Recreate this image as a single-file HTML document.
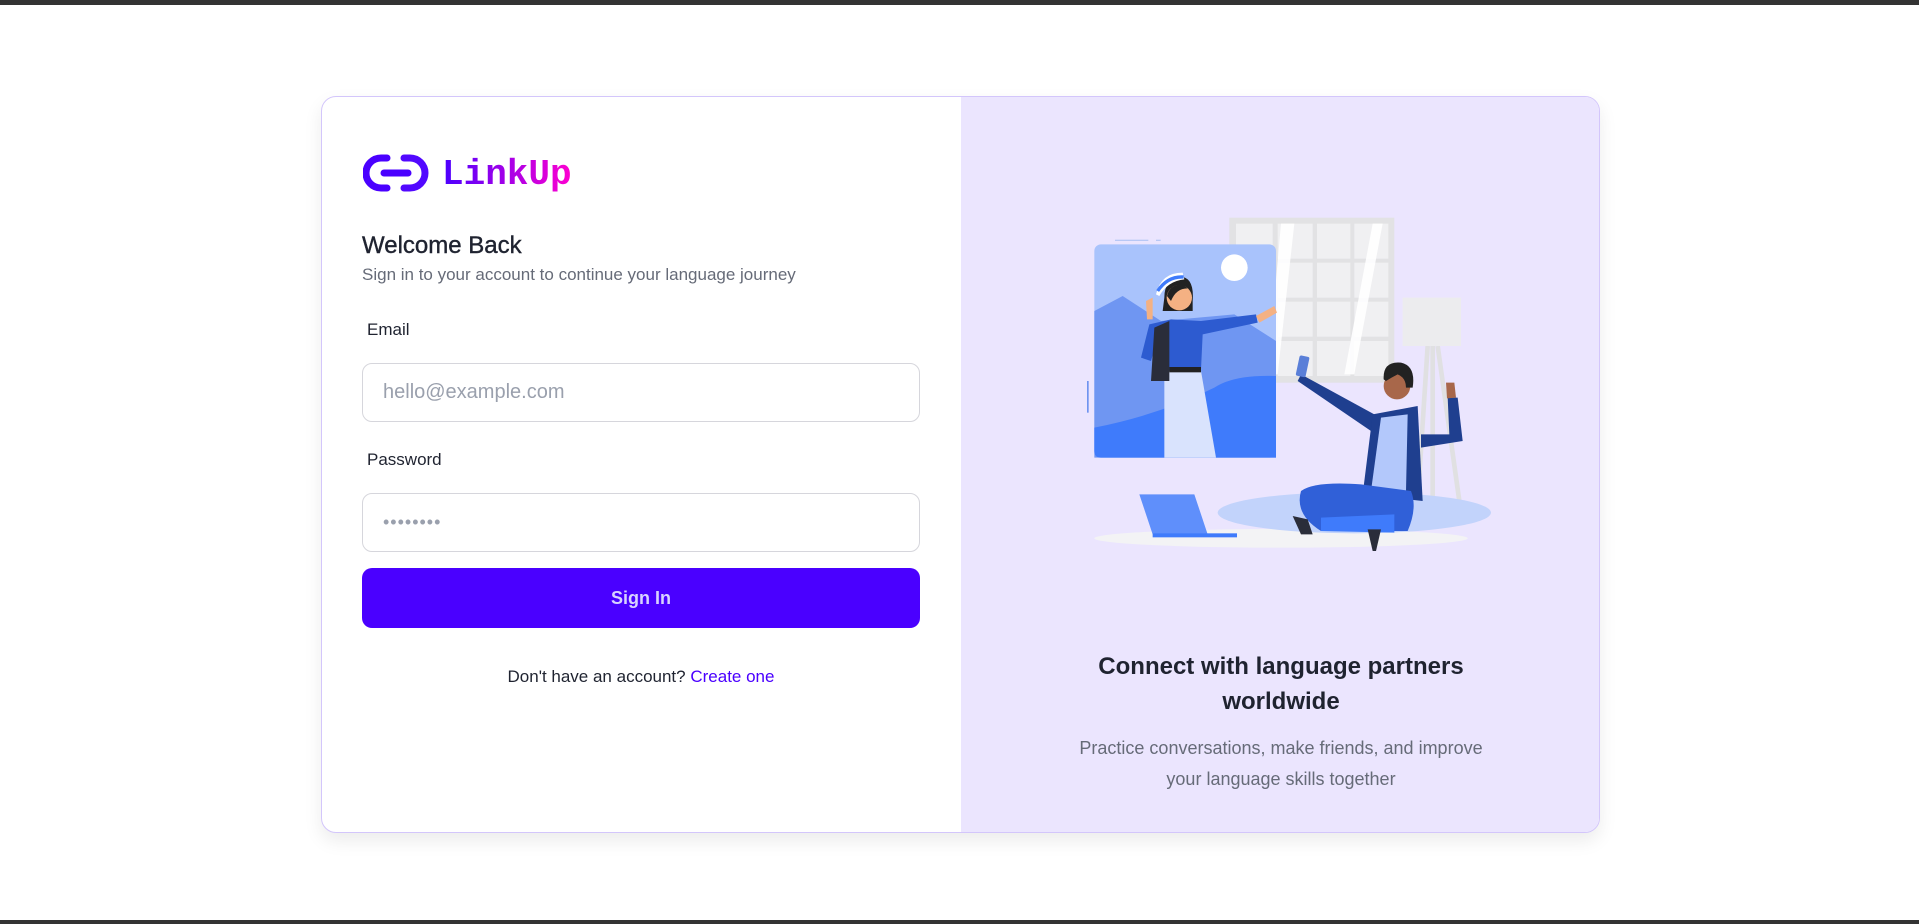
<!DOCTYPE html>
<html><head><meta charset="utf-8"><style>
*{box-sizing:border-box;margin:0;padding:0}
html,body{width:1919px;height:924px;overflow:hidden;background:#fff;font-family:"Liberation Sans",sans-serif}
.topbar{position:absolute;left:0;top:0;width:1919px;height:5px;background:#333}
.botbar{position:absolute;left:0;top:920px;width:1919px;height:4px;background:#333}
.card{position:absolute;left:321px;top:96px;width:1279px;height:737px;border:1.5px solid #d3c6fb;border-radius:15px;overflow:hidden;box-shadow:0 8px 18px rgba(0,0,0,.08);background:#fff}
.right{position:absolute;left:639px;top:0;width:640px;height:737px;background:#ebe5fe}
.abs{position:absolute}
.t{color:#1f2330}
.input{position:absolute;left:40px;width:558px;height:59px;border:1.5px solid #d6d6dc;border-radius:10px;font-size:20px;color:#9aa0ad;padding-left:20px;line-height:56px}
</style></head><body>
<div class="topbar"></div><div class="botbar"></div>
<div class="card">
  <svg class="abs" style="left:41px;top:56px" width="66" height="40" viewBox="0 0 66 40">
    <path d="M24 5 H18 A15 15 0 0 0 18 35 H24" fill="none" stroke="#4a00ff" stroke-width="7" stroke-linecap="round"/>
    <path d="M41 5 H47 A15 15 0 0 1 47 35 H41" fill="none" stroke="#5208ff" stroke-width="7" stroke-linecap="round"/>
    <path d="M21 20 H45" stroke="#4a00ff" stroke-width="7" stroke-linecap="round"/>
  </svg>
  <div class="abs" style="left:120px;top:56px;font-family:'Liberation Mono',monospace;font-weight:bold;font-size:36px;line-height:44px;background:linear-gradient(90deg,#4a00ff,#ff00d0);-webkit-background-clip:text;background-clip:text;color:transparent">LinkUp</div>
  <div class="abs t" style="left:40px;top:134px;font-size:24px;line-height:30px;-webkit-text-stroke:0.4px #1f2330">Welcome Back</div>
  <div class="abs" style="left:40px;top:167px;font-size:17px;line-height:22px;color:#666b78">Sign in to your account to continue your language journey</div>
  <div class="abs t" style="left:45px;top:222px;font-size:17px;line-height:22px">Email</div>
  <div class="input" style="top:266px">hello@example.com</div>
  <div class="abs t" style="left:45px;top:352px;font-size:17px;line-height:22px">Password</div>
  <div class="input" style="top:396px;letter-spacing:1px;font-size:18px">••••••••</div>
  <div class="abs" style="left:40px;top:471px;width:558px;height:60px;background:#4a00ff;border-radius:10px;color:#d8d2ff;font-size:18px;font-weight:bold;text-align:center;line-height:60px">Sign In</div>
  <div class="abs t" style="left:40px;top:568px;width:558px;text-align:center;font-size:17px;line-height:24px">Don't have an account? <span style="color:#4a00ff">Create one</span></div>

  <div class="right">
    <div class="abs t" style="left:0;top:552px;width:640px;text-align:center;font-size:24px;line-height:35px;font-weight:bold">Connect with language partners<br>worldwide</div>
    <div class="abs" style="left:0;top:636px;width:640px;text-align:center;font-size:18px;line-height:31px;color:#666b78">Practice conversations, make friends, and improve<br>your language skills together</div>
  </div>
  <svg class="abs" style="left:739px;top:104px" width="460" height="360" viewBox="0 0 1380 1080">
    <ellipse cx="660" cy="1012" rx="560" ry="28" fill="#f3f3f5"/>
    <rect x="505" y="50" width="495" height="495" fill="#e2e2e4"/>
    <g fill="#f0f0f2">
      <rect x="525" y="68" width="110" height="105"/><rect x="650" y="68" width="105" height="105"/><rect x="768" y="68" width="100" height="105"/><rect x="880" y="68" width="102" height="105"/>
      <rect x="525" y="185" width="110" height="105"/><rect x="650" y="185" width="105" height="105"/><rect x="768" y="185" width="100" height="105"/><rect x="880" y="185" width="102" height="105"/>
      <rect x="525" y="302" width="110" height="105"/><rect x="650" y="302" width="105" height="105"/><rect x="768" y="302" width="100" height="105"/><rect x="880" y="302" width="102" height="105"/>
      <rect x="525" y="420" width="110" height="105"/><rect x="650" y="420" width="105" height="105"/><rect x="768" y="420" width="100" height="105"/><rect x="880" y="420" width="102" height="105"/>
    </g>
    <path d="M660 68 L700 68 L650 520 L620 520Z M935 68 L965 68 L880 520 L850 520Z" fill="#fff" opacity=".9"/>
    <path d="M1100 435 L1070 900 M1115 435 L1115 900 M1130 435 L1195 900" stroke="#e0e0e2" stroke-width="14"/>
    <rect x="1025" y="290" width="175" height="145" fill="#ececee"/>
    <rect x="162" y="116" width="100" height="4" fill="#b8c8f5"/><rect x="285" y="116" width="14" height="4" fill="#b8c8f5"/>
    <rect x="78" y="540" width="5" height="95" fill="#6f94f0"/>
    <rect x="100" y="130" width="545" height="640" rx="20" fill="#a9c3fc"/>
    <circle cx="520" cy="200" r="40" fill="#fff"/>
    <path d="M100 330 L185 285 L300 360 L520 340 L645 420 L645 770 L100 770Z" fill="#6f96f2"/>
    <path d="M100 680 Q300 640 460 560 Q520 520 645 525 L645 770 L120 770 Q100 770 100 750Z" fill="#3f7bfb"/>
    <path d="M310 510 L420 510 L465 770 L310 770Z" fill="#d9e3fd"/>
    <path d="M265 370 L330 355 L420 360 L585 340 L590 365 L425 400 L420 505 L325 510 Z" fill="#2d5bd0"/>
    <path d="M265 370 L240 470 L270 480 L290 410Z" fill="#2d5bd0"/>
    <path d="M280 380 L325 360 L325 540 L270 540Z" fill="#2a2d3a"/>
    <rect x="325" y="498" width="95" height="16" fill="#222"/>
    <path d="M585 345 L640 315 L648 335 L595 365Z" fill="#f4b183"/>
    <path d="M255 300 L275 290 L275 355 L258 355Z" fill="#f4b183"/>
    <path d="M310 290 Q310 230 365 228 Q400 235 395 300 L395 330 L305 330Z" fill="#222"/>
    <circle cx="355" cy="290" r="38" fill="#f4b183"/>
    <path d="M318 285 Q325 250 365 250 L380 262 Q345 262 330 300Z" fill="#222"/>
    <path d="M285 280 Q300 215 365 215 L370 235 Q320 240 295 285Z" fill="#fff"/>
    <path d="M290 270 Q320 225 368 228" stroke="#3f7bfb" stroke-width="10" fill="none"/>
    <ellipse cx="880" cy="935" rx="410" ry="62" fill="#c2d3fb"/>
    <path d="M235 880 L400 880 L440 1000 L275 1000Z" fill="#5f8ffb"/>
    <rect x="275" y="997" width="253" height="12" fill="#3f7bfb"/>
    <path d="M710 540 L720 520 L940 640 L930 690Z" fill="#1f3f8f"/>
    <path d="M1160 590 L1190 590 L1205 720 L1080 740 L1080 700 L1165 700Z" fill="#1f3f8f"/>
    <path d="M935 640 L1070 615 L1085 900 L905 880Z" fill="#1f3f8f"/>
    <path d="M960 650 L1040 640 L1035 870 L930 870Z" fill="#b3c8fb"/>
    <path d="M720 870 Q760 840 900 850 L1050 870 Q1070 920 1040 990 L780 990 Q700 940 720 870Z" fill="#3060d8"/>
    <path d="M780 950 L1000 940 L1000 995 L780 990Z" fill="#3f7bfb"/>
    <path d="M695 945 L740 955 L755 1000 L720 1000Z" fill="#2a2d3a"/>
    <path d="M920 985 L960 985 L945 1050 L935 1050Z" fill="#2a2d3a"/>
    <rect x="710" y="465" width="30" height="62" rx="5" transform="rotate(12 725 495)" fill="#5a7fd8"/>
    <path d="M1155 545 L1180 545 L1185 590 L1158 592Z" fill="#a8674a"/>
    <circle cx="1008" cy="555" r="40" fill="#a8674a"/>
    <path d="M968 535 Q965 480 1020 485 Q1065 495 1055 560 L1035 560 Q1035 530 1010 520 Q990 530 975 540Z" fill="#222"/>
  </svg>
</div>
</body></html>
